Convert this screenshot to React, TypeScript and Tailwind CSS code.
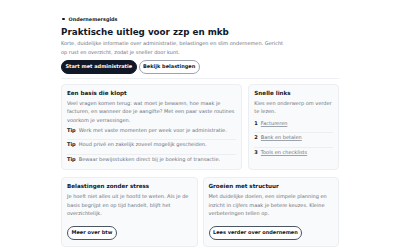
const tips = [
  'Werk met vaste momenten per week voor je administratie.',
  'Houd privé en zakelijk zoveel mogelijk gescheiden.',
  'Bewaar bewijsstukken direct bij je boeking of transactie.',
];

const links = ['Factureren', 'Bank en betalen', 'Tools en checklists'];

function Card({ className = '', children }: { className?: string; children: React.ReactNode }) {
  return (
    <section className={`rounded-[4px] border border-[#eceef1] bg-[#f9fafb] px-[5px] pt-[5px] ${className}`}>
      {children}
    </section>
  );
}

function CardTitle({ children }: { children: React.ReactNode }) {
  return <h2 className="text-[5.6px] font-bold leading-[6.5px] text-[#111827]">{children}</h2>;
}

export default function App() {
  return (
    <div className="min-h-screen bg-white font-['DejaVu_Sans',sans-serif] text-[#111827]">
      <div className="mx-auto w-[278px] pt-[15px]">
        {/* hero */}
        <header className="border-b border-[#eeeff2] pb-[4px]">
          <div className="flex items-center gap-[4px] text-[4.9px] font-bold leading-[8px]">
            <span className="ml-[1px] h-[2.5px] w-[2.5px] rounded-full bg-[#111827]" />
            Ondernemersgids
          </div>
          <h1 className="mt-[2.5px] text-[8.75px] font-bold leading-[12px]">
            Praktische uitleg voor zzp en mkb
          </h1>
          <p className="mt-[1px] max-w-[228px] text-[5px] leading-[9px] text-[#6b7280]">
            Korte, duidelijke informatie over administratie, belastingen en slim ondernemen. Gericht op rust en
            overzicht, zodat je sneller door kunt.
          </p>
          <div className="mt-[3.5px] flex gap-[2px]">
            <button className="rounded-full border border-[#111827] bg-[#111827] px-[3.5px] py-[2px] text-[5px] font-bold leading-[7.5px] text-white">
              Start met administratie
            </button>
            <button className="rounded-full border border-[#9ca3af] bg-white px-[3.5px] py-[2px] text-[5px] font-bold leading-[7.5px] text-[#111827]">
              Bekijk belastingen
            </button>
          </div>
        </header>

        {/* bovenste rij */}
        <div className="mt-[5px] grid grid-cols-[2fr_1fr] gap-[6px]">
          <Card className="pb-[6px]">
            <CardTitle>Een basis die klopt</CardTitle>
            <p className="mt-[3px] text-[5px] leading-[8.3px] text-[#6b7280]">
              Veel vragen komen terug: wat moet je bewaren, hoe maak je facturen, en wanneer doe je aangifte? Met een
              paar vaste routines voorkom je verrassingen.
            </p>
            <ul className="mt-[2px] divide-y divide-[#eceef1]">
              {tips.map((tip, i) => (
                <li
                  key={tip}
                  className={`flex gap-[3px] text-[5px] leading-[8px] ${i < tips.length - 1 ? 'pb-[5.5px]' : ''}`}
                >
                  <span className="font-bold text-[#111827]">Tip</span>
                  <span className="text-[#6b7280]">{tip}</span>
                </li>
              ))}
            </ul>
          </Card>

          <Card className="pb-[6px]">
            <CardTitle>Snelle links</CardTitle>
            <p className="mt-[3px] text-[5px] leading-[8.3px] text-[#6b7280]">Kies een onderwerp om verder te lezen.</p>
            <ol className="mt-[3px] divide-y divide-[#eceef1]">
              {links.map((link, i) => (
                <li
                  key={link}
                  className={`flex gap-[3px] text-[5px] leading-[8px] ${i < links.length - 1 ? 'pb-[5.5px]' : ''}`}
                >
                  <span className="font-bold text-[#111827]">{i + 1}</span>
                  <a href="#" className="text-[#6b7280] underline decoration-[#9ca3af] underline-offset-[1px]">
                    {link}
                  </a>
                </li>
              ))}
            </ol>
          </Card>
        </div>

        {/* onderste rij */}
        <div className="mt-[7px] grid grid-cols-2 gap-[5px]">
          <Card className="pb-[5px]">
            <CardTitle>Belastingen zonder stress</CardTitle>
            <p className="mt-[3px] text-[5px] leading-[8.3px] text-[#6b7280]">
              Je hoeft niet alles uit je hoofd te weten. Als je de basis begrijpt en op tijd handelt, blijft het
              overzichtelijk.
            </p>
            <button className="mt-[4px] rounded-full border border-[#4b5563] bg-white px-[3.5px] py-[2.5px] text-[5px] font-bold leading-[7px] text-[#111827]">
              Meer over btw
            </button>
          </Card>

          <Card className="pb-[5px]">
            <CardTitle>Groeien met structuur</CardTitle>
            <p className="mt-[3px] text-[5px] leading-[8.3px] text-[#6b7280]">
              Met duidelijke doelen, een simpele planning en inzicht in cijfers maak je betere keuzes. Kleine
              verbeteringen tellen op.
            </p>
            <button className="mt-[4px] rounded-full border border-[#4b5563] bg-white px-[3.5px] py-[2.5px] text-[5px] font-bold leading-[7px] text-[#111827]">
              Lees verder over ondernemen
            </button>
          </Card>
        </div>
      </div>
    </div>
  );
}
